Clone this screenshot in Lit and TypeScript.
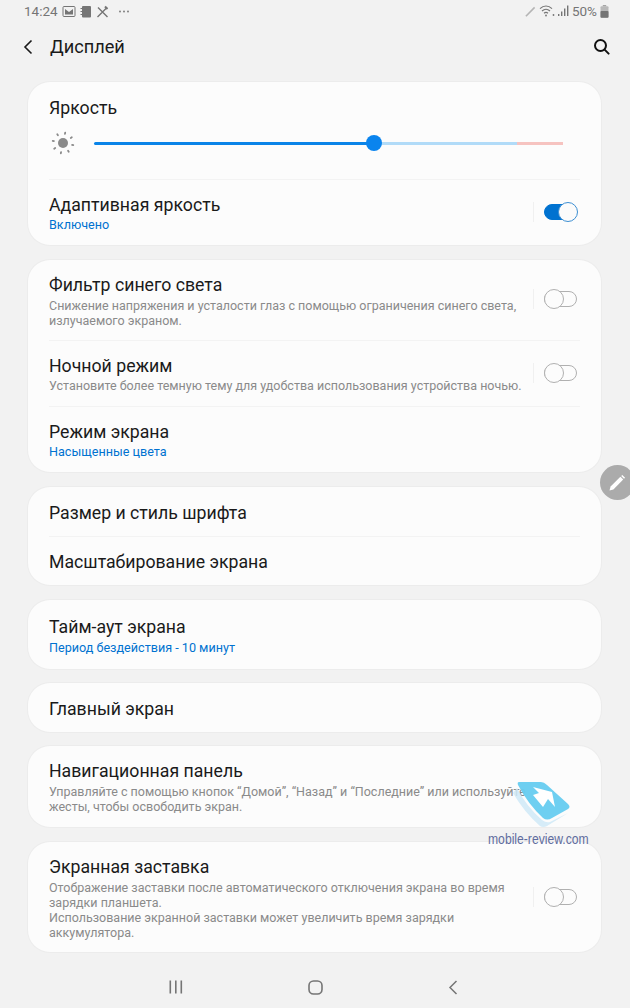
import { LitElement, css, html, nothing, svg } from 'lit';
import { customElement, property } from 'lit/decorators.js';

@customElement('ui-switch')
export class UiSwitch extends LitElement {
	@property({ type: Boolean }) on = false;

	static styles = css`
		:host {
			display: flex;
			align-items: center;
			flex: none;
			margin-left: 10px;
			padding-left: 10px;
			border-left: 1px solid #f0f0f0;
			height: 20px;
		}
		.track {
			position: relative;
			width: 33px;
			height: 16px;
			border-radius: 8px;
			box-sizing: border-box;
			border: 1px solid #b0b0b0;
			background: #fcfcfc;
		}
		.knob {
			position: absolute;
			top: -3px;
			left: -1px;
			width: 20px;
			height: 20px;
			border-radius: 50%;
			box-sizing: border-box;
			border: 1px solid #b0b0b0;
			background: #fcfcfc;
		}
		.on {
			background: #0072d0;
			border-color: #0072d0;
		}
		.on .knob {
			left: auto;
			right: -2px;
			border-color: #3d8fd3;
			background: #fbfbfb;
		}
	`;

	render() {
		return html`<div class="track ${this.on ? 'on' : ''}"><div class="knob"></div></div>`;
	}
}

@customElement('app-root')
export class AppRoot extends LitElement {
	static styles = css`
		:host {
			display: block;
			position: relative;
			width: 630px;
			height: 1008px;
			overflow: hidden;
			background: #f2f2f2;
			font-family: Roboto, 'Noto Sans', sans-serif;
			color: #1a1a1a;
		}
		.status {
			display: flex;
			align-items: center;
			height: 22px;
			padding: 0 21px 0 24px;
			color: #757575;
			font-size: 13.5px;
		}
		.status svg {
			display: block;
			flex: none;
		}
		.status-left {
			display: flex;
			align-items: center;
			gap: 4px;
		}
		.dots {
			margin-left: 5px;
		}
		.status-right {
			display: flex;
			align-items: center;
			gap: 3px;
			margin-left: auto;
		}
		.appbar {
			display: flex;
			align-items: center;
			height: 49px;
			padding: 0 20px 0 23px;
		}
		.appbar h1 {
			margin: 0 0 0 17px;
			font-size: 18.2px;
			font-weight: 400;
		}
		.appbar .search {
			margin-left: auto;
		}
		.list {
			display: flex;
			flex-direction: column;
			gap: 15px;
			margin: 11px 29px 0 28px;
		}
		.card {
			background: #fcfcfc;
			border-radius: 22px;
			box-shadow: 0 0 0 1px #ececec;
		}
		.card.near {
			margin-top: -1px;
		}
		.row {
			display: flex;
			align-items: center;
			padding: 14px 24px 12px 21px;
		}
		.row ui-switch {
			margin-bottom: 2px;
		}
		.text {
			flex: 1;
			min-width: 0;
		}
		.title {
			font-size: 17.7px;
			line-height: 22px;
		}
		.sub {
			font-size: 12.5px;
			line-height: 15px;
			color: #8a8a8a;
		}
		.title + .sub {
			margin-top: 2px;
		}
		.value {
			font-size: 12.6px;
			line-height: 15px;
			color: #0072d0;
		}
		.title + .value {
			margin-top: 1px;
		}
		.row.mode {
			padding-bottom: 13px;
		}
		.row.adaptive {
			padding-bottom: 13px;
		}
		.row.filter ui-switch {
			margin-bottom: 4px;
		}
		.row.night {
			padding-bottom: 13px;
		}
		.night .title + .sub {
			margin-top: 1px;
		}
		.row.single {
			padding-top: 15px;
		}
		.row.tight {
			padding-top: 14px;
		}
		.row.extra {
			padding-bottom: 13px;
		}
		.row.timeout {
			padding: 16px 24px 14px 21px;
		}
		.timeout .title + .value {
			margin-top: 2px;
		}
		.divider {
			height: 1px;
			margin: 0 21px;
			background: #f3f3f3;
		}
		.brightness {
			padding: 15px 38px 0 21px;
			height: 82px;
		}
		.slider-row {
			display: flex;
			align-items: center;
			margin-top: 12px;
		}
		.sun {
			display: block;
			margin-left: 2px;
		}
		.slider {
			position: relative;
			display: flex;
			margin-left: 19px;
			flex: 1;
			height: 3px;
		}
		.seg-fill {
			width: 280px;
			background: #0a84e8;
			border-radius: 2px 0 0 2px;
		}
		.seg-rest {
			width: 143px;
			background: #b1dbf8;
		}
		.seg-hot {
			flex: 1;
			background: #f6c3c0;
		}
		.thumb {
			position: absolute;
			left: 272px;
			top: -6.5px;
			width: 16px;
			height: 16px;
			border-radius: 50%;
			background: #0a84ee;
		}
		.nav {
			display: flex;
			justify-content: center;
			align-items: center;
			gap: 125px;
			position: absolute;
			left: 0;
			right: 4px;
			bottom: 11px;
			height: 20px;
		}
		.edge {
			position: absolute;
			left: 600px;
			top: 465px;
			width: 35px;
			height: 35px;
			border-radius: 50%;
			background: #ababab;
			display: flex;
			align-items: center;
			justify-content: center;
		}
		.edge svg {
			margin-right: 1px;
		}
		.mark {
			position: absolute;
			left: 488px;
			top: 780px;
			width: 105px;
			height: 70px;
			pointer-events: none;
		}
		.mark svg {
			position: absolute;
			left: 22px;
			top: 0;
		}
		.mark span {
			position: absolute;
			left: 0;
			top: 50px;
			font-family: 'Liberation Sans', sans-serif;
			font-size: 15px;
			line-height: 18px;
			color: #5f6c9e;
			white-space: nowrap;
			transform: scaleX(0.81);
			transform-origin: left center;
		}
	`;

	renderRow(title: string, opts: { sub?: string[]; value?: string; toggle?: boolean; cls?: string } = {}) {
		return html`
			<div class="row ${opts.cls ?? ''}">
				<div class="text">
					<div class="title">${title}</div>
					${opts.sub ? opts.sub.map((s) => html`<div class="sub">${s}</div>`) : nothing}
					${opts.value ? html`<div class="value">${opts.value}</div>` : nothing}
				</div>
				${opts.toggle ? html`<ui-switch></ui-switch>` : nothing}
			</div>
		`;
	}

	renderSun() {
		const rays = [0, 45, 90, 135, 180, 225, 270, 315];
		return html`
			<svg class="sun" width="24" height="24" viewBox="0 0 24 24" fill="#8a8a8a">
				<circle cx="12" cy="12" r="5"></circle>
				${rays.map(
					(a) => svg`<rect x="11.1" y="0.6" width="1.8" height="3" rx="0.9" transform="rotate(${a + 12} 12 12)"></rect>`
				)}
			</svg>
		`;
	}

	render() {
		return html`
			<div class="status">
				<div class="status-left">
					<span>14:24</span>
					<svg width="14" height="13" viewBox="0 0 14 13" fill="none" stroke="#757575">
						<rect x="1" y="1.5" width="12" height="10" rx="1"></rect>
						<path d="M3 9.5V4l4 3 4-3v5.5z" fill="#757575" stroke="none"></path>
					</svg>
					<svg width="12" height="13" viewBox="0 0 12 13" fill="#757575">
						<rect x="2" y="1" width="9" height="11.5" rx="1"></rect>
						<rect x="0.5" y="3" width="2" height="1"></rect>
						<rect x="0.5" y="6" width="2" height="1"></rect>
						<rect x="0.5" y="9" width="2" height="1"></rect>
					</svg>
					<svg width="13" height="13" viewBox="0 0 13 13" fill="none" stroke="#757575" stroke-width="1.4">
						<path d="M1.5 12 11 2.5M2 2.5 11.5 12"></path>
						<path d="M9 1.5l2.5 2.5" stroke-width="2"></path>
					</svg>
					<svg class="dots" width="12" height="13" viewBox="0 0 12 13" fill="#757575">
						<circle cx="2" cy="6.5" r="0.9"></circle>
						<circle cx="6" cy="6.5" r="0.9"></circle>
						<circle cx="10" cy="6.5" r="0.9"></circle>
					</svg>
				</div>
				<div class="status-right">
					<svg width="11" height="11" viewBox="0 0 12 12" fill="none" stroke="#b5b5b5" stroke-width="1.8">
						<path d="M1 11.2 10.5 1.5"></path>
					</svg>
					<svg width="16" height="14" viewBox="0 0 16 14" fill="none" stroke="#757575" stroke-width="1.2">
						<path d="M1 4.6C4.6 1.4 9.4 1.4 13 4.6M3 7C5.4 4.9 8.6 4.9 11 7M5 9.3C6.2 8.3 7.8 8.3 9 9.3"></path>
						<circle cx="7" cy="11.5" r="0.9" fill="#757575" stroke="none"></circle>
						<circle cx="14.5" cy="11" r="0.9" fill="#757575" stroke="none"></circle>
					</svg>
					<svg width="11" height="12" viewBox="0 0 11 12" fill="#757575">
						<rect x="0" y="9" width="1.4" height="2"></rect>
						<rect x="3" y="6.5" width="1.4" height="4.5"></rect>
						<rect x="6" y="3.5" width="1.4" height="7.5"></rect>
						<rect x="9" y="0.5" width="1.4" height="10.5"></rect>
					</svg>
					<span>50%</span>
					<svg width="9" height="13" viewBox="0 0 9 13" fill="#757575">
						<rect x="2.8" y="0" width="3.4" height="1.5" fill="#a5a5a5"></rect>
						<rect x="0.5" y="1.2" width="8" height="11.5" rx="1" fill="#b9b9b9"></rect>
						<rect x="0.5" y="6" width="8" height="6.7" rx="1"></rect>
					</svg>
				</div>
			</div>

			<div class="appbar">
				<svg width="10" height="16" viewBox="0 0 10 16" fill="none" stroke="#1a1a1a" stroke-width="1.6">
					<path d="M8.5 1.5 2 8l6.5 6.5"></path>
				</svg>
				<h1>Дисплей</h1>
				<svg class="search" width="17" height="17" viewBox="0 0 17 17" fill="none" stroke="#111" stroke-width="2">
					<circle cx="7.5" cy="7.5" r="5.5"></circle>
					<path d="m11.6 11.6 4 4" stroke-linecap="round"></path>
				</svg>
			</div>

			<div class="list">
				<div class="card">
					<div class="brightness">
						<div class="title">Яркость</div>
						<div class="slider-row">
							${this.renderSun()}
							<div class="slider">
								<div class="seg-fill"></div>
								<div class="seg-rest"></div>
								<div class="seg-hot"></div>
								<div class="thumb"></div>
							</div>
						</div>
					</div>
					<div class="divider"></div>
					<div class="row adaptive">
						<div class="text">
							<div class="title">Адаптивная яркость</div>
							<div class="value">Включено</div>
						</div>
						<ui-switch on></ui-switch>
					</div>
				</div>

				<div class="card">
					${this.renderRow('Фильтр синего света', {
						sub: ['Снижение напряжения и усталости глаз с помощью ограничения синего света,', 'излучаемого экраном.'],
						toggle: true,
						cls: 'filter',
					})}
					<div class="divider"></div>
					${this.renderRow('Ночной режим', {
						sub: ['Установите более темную тему для удобства использования устройства ночью.'],
						toggle: true,
						cls: 'night',
					})}
					<div class="divider"></div>
					${this.renderRow('Режим экрана', { value: 'Насыщенные цвета', cls: 'mode' })}
				</div>

				<div class="card">
					${this.renderRow('Размер и стиль шрифта', { cls: 'single' })}
					<div class="divider"></div>
					${this.renderRow('Масштабирование экрана', { cls: 'tight' })}
				</div>

				<div class="card">${this.renderRow('Тайм-аут экрана', { value: 'Период бездействия - 10 минут', cls: 'timeout' })}</div>

				<div class="card near">${this.renderRow('Главный экран', { cls: 'single' })}</div>

				<div class="card near">
					${this.renderRow('Навигационная панель', {
						sub: ['Управляйте с помощью кнопок “Домой”, “Назад” и “Последние” или используйте', 'жесты, чтобы освободить экран.'],
						cls: 'extra',
					})}
				</div>

				<div class="card">
					${this.renderRow('Экранная заставка', {
						sub: [
							'Отображение заставки после автоматического отключения экрана во время',
							'зарядки планшета.',
							'Использование экранной заставки может увеличить время зарядки',
							'аккумулятора.',
						],
						toggle: true,
					})}
				</div>
			</div>

			<div class="nav">
				<svg width="14" height="14" viewBox="0 0 14 14" fill="#757575">
					<rect x="0.5" y="0.5" width="1.6" height="13"></rect>
					<rect x="6" y="0.5" width="1.6" height="13"></rect>
					<rect x="11.5" y="0.5" width="1.6" height="13"></rect>
				</svg>
				<svg width="15" height="15" viewBox="0 0 15 15" fill="none" stroke="#757575" stroke-width="1.6">
					<rect x="1" y="1" width="13" height="13" rx="4.5"></rect>
				</svg>
				<svg width="10" height="15" viewBox="0 0 10 15" fill="none" stroke="#757575" stroke-width="1.5">
					<path d="M8.5 1 2 7.5 8.5 14"></path>
				</svg>
			</div>

			<div class="edge">
				<svg width="18" height="18" viewBox="0 0 18 18" fill="#fff">
					<path d="M1.5 16.5 2.6 12.6 12.4 2.8 15.2 5.6 5.4 15.4z"></path>
					<path d="M13.2 2 14.3 0.9 17.1 3.7 16 4.8z"></path>
				</svg>
			</div>

			<div class="mark">
				<svg width="64" height="50" viewBox="0 0 64 50">
					<path d="M3 13Q14 32 30 46 33 48 37 46L58 33 40 42Q36 43 32 40 16 26 7 8z" fill="#cfe9f7" opacity="0.85"></path>
					<path d="M9 2H31Q34 2 37 5L58 24Q61 27 58 29L42 38Q37 41 33 38 18 24 8 5 7 2 9 2z" fill="#68cdf0" opacity="0.96"></path>
					<path d="M23 7 42 12 45 27 38 19 33 27 23 15 29 13z" fill="#fff"></path>
				</svg>
				<span>mobile-review.com</span>
			</div>
		`;
	}
}

declare global {
	interface HTMLElementTagNameMap {
		'app-root': AppRoot;
		'ui-switch': UiSwitch;
	}
}
